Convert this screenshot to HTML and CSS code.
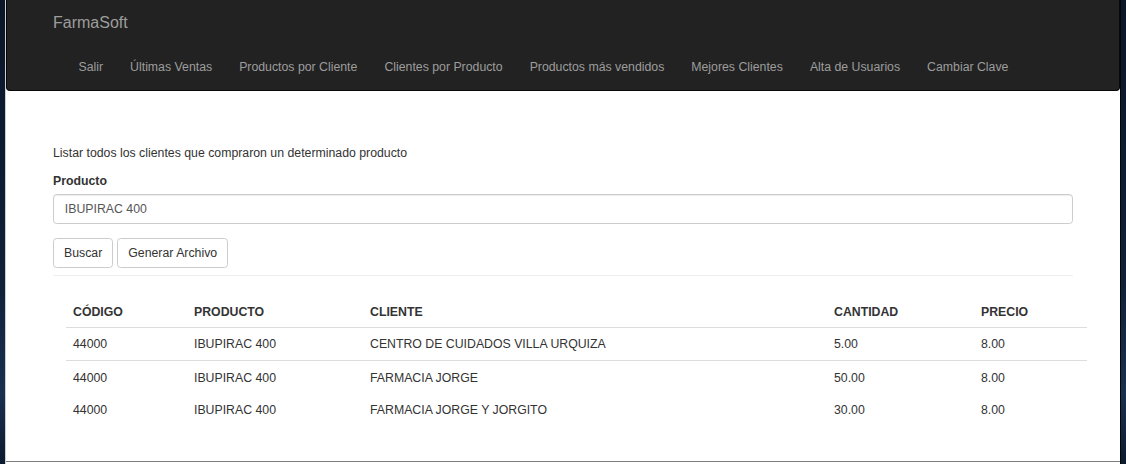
FILE: index.html
```html
<!DOCTYPE html>
<html lang="es">
<head>
<meta charset="utf-8">
<title>FarmaSoft</title>
<link rel="stylesheet" href="styles.css">
</head>
<body>
<div class="window">
  <div class="page">
    <nav class="navbar">
      <div class="navbar-header">
        <a class="brand" href="#">FarmaSoft</a>
      </div>
      <ul class="nav">
        <li><a href="#">Salir</a></li>
        <li><a href="#">Últimas Ventas</a></li>
        <li><a href="#">Productos por Cliente</a></li>
        <li><a href="#">Clientes por Producto</a></li>
        <li><a href="#">Productos más vendidos</a></li>
        <li><a href="#">Mejores Clientes</a></li>
        <li><a href="#">Alta de Usuarios</a></li>
        <li><a href="#">Cambiar Clave</a></li>
      </ul>
    </nav>
    <main class="content">
      <p class="intro">Listar todos los clientes que compraron un determinado producto</p>
      <div class="form-group">
        <label class="label" for="producto">Producto</label>
        <input class="input" id="producto" type="text" value="IBUPIRAC 400">
      </div>
      <div class="actions">
        <button class="btn" type="button">Buscar</button>
        <button class="btn" type="button">Generar Archivo</button>
      </div>
      <hr class="divider">
      <div class="table-wrap">
        <table class="table">
          <colgroup>
            <col class="c1"><col class="c2"><col class="c3"><col class="c4"><col class="c5">
          </colgroup>
          <thead>
            <tr><th>CÓDIGO</th><th>PRODUCTO</th><th>CLIENTE</th><th>CANTIDAD</th><th>PRECIO</th></tr>
          </thead>
          <tbody>
            <tr><td>44000</td><td>IBUPIRAC 400</td><td>CENTRO DE CUIDADOS VILLA URQUIZA</td><td>5.00</td><td>8.00</td></tr>
            <tr class="lined"><td>44000</td><td>IBUPIRAC 400</td><td>FARMACIA JORGE</td><td>50.00</td><td>8.00</td></tr>
            <tr><td>44000</td><td>IBUPIRAC 400</td><td>FARMACIA JORGE Y JORGITO</td><td>30.00</td><td>8.00</td></tr>
          </tbody>
        </table>
      </div>
    </main>
  </div>
</div>
</body>
</html>
```
FILE: styles.css
```css
* { box-sizing: border-box; }
html, body { margin: 0; padding: 0; }
body {
  width: 1126px;
  height: 464px;
  overflow: hidden;
  background: linear-gradient(180deg, #0b1629 0%, #0f2038 60%, #1a3050 85%, #0c1a2e 100%);
  font-family: "Liberation Sans", Arial, Helvetica, sans-serif;
  font-size: 12.3px;
  line-height: 18px;
  color: #333;
}
.window {
  margin-left: 5px;
  width: 1116px;
  height: 464px;
  border-left: 1px solid #c9ced6;
  border-right: 1px solid #050505;
  background: #fff;
  padding-bottom: 2px;
}
.page {
  height: 462px;
  border-bottom: 1px solid #7d7d7d;
  background: #fff;
  overflow: hidden;
}
.navbar {
  height: 91px;
  background: #222;
  border: 1px solid #080808;
  border-top: 0;
  border-radius: 0 0 4px 4px;
  display: flex;
  flex-direction: column;
}
.navbar-header {
  height: 45px;
  display: flex;
  align-items: center;
  padding-left: 46px;
}
.brand {
  color: #9d9d9d;
  text-decoration: none;
  font-size: 16px;
  line-height: 18px;
}
.nav {
  list-style: none;
  margin: 0;
  padding: 0 0 0 58px;
  display: flex;
  height: 45px;
}
.nav li a {
  display: block;
  padding: 13px 13.5px 14px;
  line-height: 18px;
  color: #9d9d9d;
  text-decoration: none;
}
.content {
  padding: 53px 47px 0 47px;
}
.intro { margin: 0 0 10px; }
.form-group { margin-bottom: 13.5px; }
.label {
  display: block;
  font-weight: bold;
  margin-bottom: 3.5px;
}
.input {
  display: block;
  width: 100%;
  height: 30.6px;
  padding: 5.4px 10.8px;
  font-family: inherit;
  font-size: 12.3px;
  line-height: 18px;
  color: #555;
  border: 1px solid #ccc;
  border-radius: 3.6px;
  background: #fff;
  box-shadow: inset 0 1px 1px rgba(0,0,0,.075);
}
.actions {
  display: flex;
  gap: 4px;
}
.btn {
  font-family: inherit;
  font-size: 12.3px;
  line-height: 18px;
  color: #333;
  background: #fff;
  border: 1px solid #ccc;
  border-radius: 3.6px;
  padding: 5.4px 10px;
  height: 30.8px;
}
.divider {
  margin: 7px 0 0;
  border: 0;
  border-top: 1px solid #eee;
}
.table-wrap {
  margin: 19px -15px 0 13px;
}
.table {
  width: 1021px;
  border-collapse: collapse;
  table-layout: fixed;
}
.c1 { width: 121px; }
.c2 { width: 176px; }
.c3 { width: 464px; }
.c4 { width: 147px; }
.c5 { width: 113px; }
.table th, .table td {
  text-align: left;
  padding: 7.7px 7px 6.7px;
  line-height: 18px;
  vertical-align: top;
}
.table th {
  padding: 7.2px 7px 6.2px;
  font-weight: bold;
  border-bottom: 1px solid #ddd;
}
.table tr.lined td { border-top: 1px solid #ddd; }
```
